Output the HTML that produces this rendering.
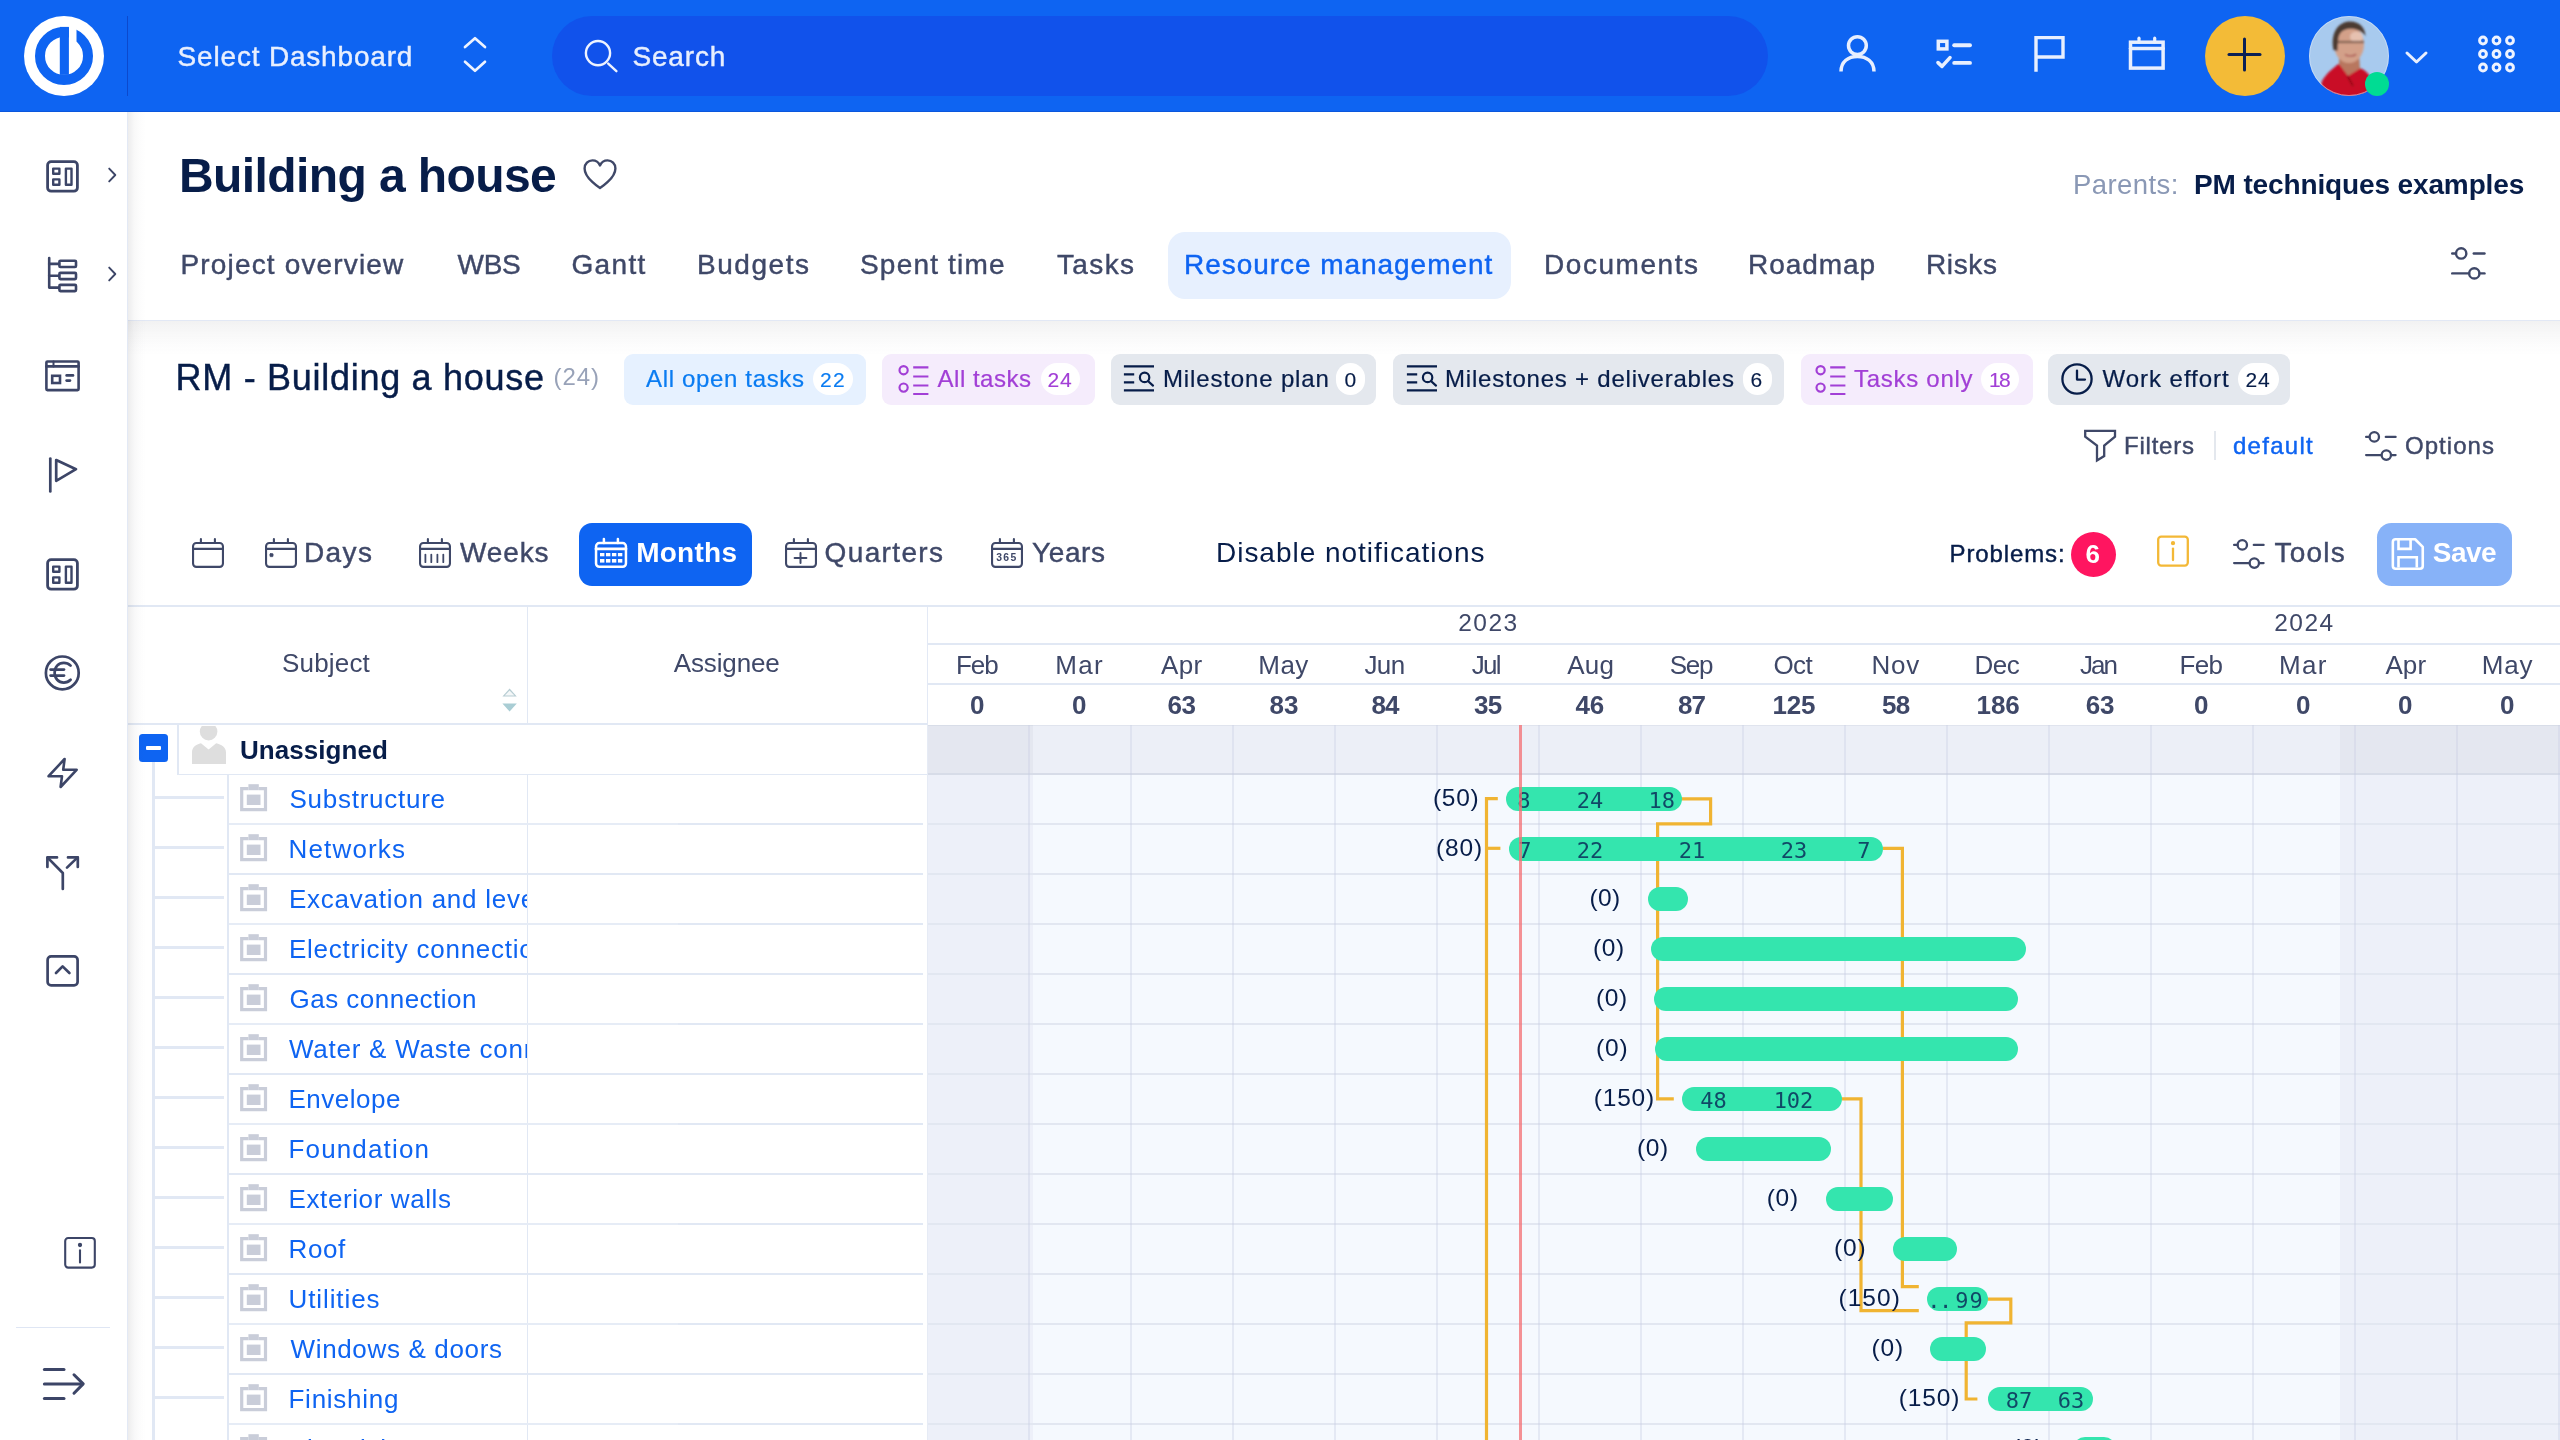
<!DOCTYPE html>
<html lang="en"><head><meta charset="utf-8"><title>Building a house - Resource management</title>
<style>
html,body{margin:0;padding:0}
body{width:2560px;height:1440px;overflow:hidden;background:#fff;position:relative;font-family:"Liberation Sans",sans-serif}
.a{position:absolute;display:block}
.g{position:absolute;left:0;top:0;width:0;height:0;display:block;margin:0;padding:0}
.t{position:absolute;display:block;white-space:nowrap;margin:0;padding:0;font-weight:400;text-decoration:none}
svg{overflow:visible}
main{position:absolute;left:0;top:0;width:2560px;height:1440px;overflow:hidden;will-change:transform}
</style></head>
<body>
<main>
<section class="g" id="saved-queries"><h2 id="rmtitle" class="t" style="left:175.5px;top:359.53px;font-size:36px;line-height:36px;color:#071d49;letter-spacing:0.717px;-webkit-text-stroke:0.42px #071d49;">RM - Building a house</h2>
<span id="rmcnt" class="t" style="left:553.5px;top:364.88px;font-size:24px;line-height:24px;color:#98a2b8;letter-spacing:0.938px;">(24)</span>
<div class="a" style="left:624px;top:354px;width:242px;height:50.5px;background:#e6f1ff;border-radius:9px;"></div>
<span id="c1" class="t" style="left:646px;top:367.18px;font-size:24px;line-height:24px;color:#0a7cf2;letter-spacing:0.66px;-webkit-text-stroke:0.22px #0a7cf2;">All open tasks</span>
<div class="a" style="left:813px;top:363px;width:39.5px;height:31.5px;background:#fff;border-radius:16px;"></div>
<span id="c1b" class="t" style="left:820px;top:368.62px;font-size:21px;line-height:21px;color:#0a7cf2;letter-spacing:1.321px;-webkit-text-stroke:0.15px #0a7cf2;">22</span>
<div class="a" style="left:882px;top:354px;width:212.5px;height:50.5px;background:#f5ecfc;border-radius:9px;"></div>
<svg class="a" style="left:897.4px;top:364.2px;" width="32" height="33" viewBox="0 0 32 33" fill="none" stroke="#a23fd6" stroke-width="2.15" stroke-linecap="round" stroke-linejoin="round"><circle cx="6.6" cy="6.2" r="4.1"/><circle cx="6.6" cy="23.6" r="4.1"/><path stroke-linecap="butt" d="M16.2 3.4 H31.4 M16.2 12.5 H31.4 M16.2 21.5 H31.4 M16.2 30 H31.4"/></svg>
<span id="c2" class="t" style="left:937.5px;top:367.18px;font-size:24px;line-height:24px;color:#a23fd6;letter-spacing:0.518px;-webkit-text-stroke:0.22px #a23fd6;">All tasks</span>
<div class="a" style="left:1040.5px;top:363px;width:39.5px;height:31.5px;background:#fff;border-radius:16px;"></div>
<span id="c2b" class="t" style="left:1047.5px;top:368.62px;font-size:21px;line-height:21px;color:#a23fd6;letter-spacing:0.821px;-webkit-text-stroke:0.15px #a23fd6;">24</span>
<div class="a" style="left:1110.5px;top:354px;width:265.5px;height:50.5px;background:#e4e8ee;border-radius:9px;"></div>
<svg class="a" style="left:1121.4px;top:363.8px;" width="34" height="29" viewBox="0 0 34 29" fill="none" stroke="#071d49" stroke-width="2.2" stroke-linecap="round" stroke-linejoin="round"><path stroke-linecap="butt" d="M2.9 2.3 H33 M2.9 26.3 H33 M2.9 10.3 H13.2 M2.9 18.3 H13.2"/><circle cx="23.6" cy="13.4" r="4.7"/><path d="M27.2 17.2 L32 21.6"/></svg>
<span id="c3" class="t" style="left:1163px;top:367.18px;font-size:24px;line-height:24px;color:#071d49;letter-spacing:0.853px;-webkit-text-stroke:0.22px #071d49;">Milestone plan</span>
<div class="a" style="left:1336px;top:363px;width:29px;height:31.5px;background:#fff;border-radius:16px;"></div>
<span id="c3b" class="t" style="left:1344.5px;top:368.62px;font-size:21px;line-height:21px;color:#071d49;-webkit-text-stroke:0.15px #071d49;">0</span>
<div class="a" style="left:1392.5px;top:354px;width:391.5px;height:50.5px;background:#e4e8ee;border-radius:9px;"></div>
<svg class="a" style="left:1403.9px;top:363.8px;" width="34" height="29" viewBox="0 0 34 29" fill="none" stroke="#071d49" stroke-width="2.2" stroke-linecap="round" stroke-linejoin="round"><path stroke-linecap="butt" d="M2.9 2.3 H33 M2.9 26.3 H33 M2.9 10.3 H13.2 M2.9 18.3 H13.2"/><circle cx="23.6" cy="13.4" r="4.7"/><path d="M27.2 17.2 L32 21.6"/></svg>
<span id="c4" class="t" style="left:1445px;top:367.18px;font-size:24px;line-height:24px;color:#071d49;letter-spacing:0.786px;-webkit-text-stroke:0.22px #071d49;">Milestones + deliverables</span>
<div class="a" style="left:1742.5px;top:363px;width:29.5px;height:31.5px;background:#fff;border-radius:16px;"></div>
<span id="c4b" class="t" style="left:1750.5px;top:368.62px;font-size:21px;line-height:21px;color:#071d49;-webkit-text-stroke:0.15px #071d49;">6</span>
<div class="a" style="left:1800.5px;top:354px;width:232px;height:50.5px;background:#f5ecfc;border-radius:9px;"></div>
<svg class="a" style="left:1814.4px;top:364.2px;" width="32" height="33" viewBox="0 0 32 33" fill="none" stroke="#a23fd6" stroke-width="2.15" stroke-linecap="round" stroke-linejoin="round"><circle cx="6.6" cy="6.2" r="4.1"/><circle cx="6.6" cy="23.6" r="4.1"/><path stroke-linecap="butt" d="M16.2 3.4 H31.4 M16.2 12.5 H31.4 M16.2 21.5 H31.4 M16.2 30 H31.4"/></svg>
<span id="c5" class="t" style="left:1854px;top:367.18px;font-size:24px;line-height:24px;color:#a23fd6;letter-spacing:0.717px;-webkit-text-stroke:0.22px #a23fd6;">Tasks only</span>
<div class="a" style="left:1981px;top:363px;width:38px;height:31.5px;background:#fff;border-radius:16px;"></div>
<span id="c5b" class="t" style="left:1989px;top:368.62px;font-size:21px;line-height:21px;color:#a23fd6;letter-spacing:-1.679px;-webkit-text-stroke:0.15px #a23fd6;">18</span>
<div class="a" style="left:2048px;top:354px;width:242px;height:50.5px;background:#e4e8ee;border-radius:9px;"></div>
<svg class="a" style="left:2060px;top:362px;" width="34" height="34" viewBox="0 0 34 34" fill="none" stroke="#071d49" stroke-width="2.3" stroke-linecap="round" stroke-linejoin="round"><circle cx="17" cy="17" r="14.6"/><path d="M17 8.6 V17.6 H25"/></svg>
<span id="c6" class="t" style="left:2102.5px;top:367.18px;font-size:24px;line-height:24px;color:#071d49;letter-spacing:0.968px;-webkit-text-stroke:0.22px #071d49;">Work effort</span>
<div class="a" style="left:2237.5px;top:363px;width:41.5px;height:31.5px;background:#fff;border-radius:16px;"></div>
<span id="c6b" class="t" style="left:2245.5px;top:368.62px;font-size:21px;line-height:21px;color:#071d49;letter-spacing:0.821px;-webkit-text-stroke:0.15px #071d49;">24</span>
<svg class="a" style="left:2082px;top:427px;" width="38" height="38" viewBox="0 0 38 38" fill="none" stroke="#3f4868" stroke-width="2.3" stroke-linecap="round" stroke-linejoin="round"><path d="M3.2 3.8 H33 V9.6 L22.2 18.6 V29 L15 33.4 V18.6 L3.2 9.6 Z" stroke-linejoin="miter"/></svg>
<span id="filters" class="t" style="left:2124px;top:433.68px;font-size:24px;line-height:24px;color:#3f4868;letter-spacing:0.778px;-webkit-text-stroke:0.42px #3f4868;">Filters</span>
<div class="a" style="left:2213.6px;top:431px;width:2.8px;height:29px;background:#e4e8ee;"></div>
<span id="default" class="t" style="left:2233px;top:433.68px;font-size:24px;line-height:24px;color:#0e64f2;letter-spacing:1.268px;-webkit-text-stroke:0.42px #0e64f2;">default</span>
<svg class="a" style="left:2365.3px;top:430.9px;" width="32" height="30" viewBox="0 0 32 30" fill="none" stroke="#3f4868" stroke-width="2.3" stroke-linecap="round" stroke-linejoin="round"><circle cx="9.3" cy="5.9" r="4.7"/><path d="M1.1 5.9 H4.4"/><path d="M20.8 5.9 H30.6"/><circle cx="21.3" cy="24.1" r="4.7"/><path d="M1.1 24.1 H16.4"/><path d="M26.2 24.1 H30.6"/></svg>
<span id="options" class="t" style="left:2405px;top:433.68px;font-size:24px;line-height:24px;color:#3f4868;letter-spacing:1.048px;-webkit-text-stroke:0.42px #3f4868;">Options</span></section>
<section class="g" id="gantt-toolbar"><svg class="a" style="left:191.9px;top:538px;" width="32" height="30" viewBox="0 0 32 30" fill="none" stroke="#3f4868" stroke-width="2.1" stroke-linecap="round" stroke-linejoin="round"><rect x="1.05" y="5.05" width="29.9" height="23.8" rx="3.3"/><path d="M8.9 1.1 V5"/><path d="M22.9 1.1 V5"/><path d="M1.05 10.9 H30.95" stroke-width="2.1"/></svg>
<svg class="a" style="left:265.3px;top:538px;" width="32" height="30" viewBox="0 0 32 30" fill="none" stroke="#3f4868" stroke-width="2.1" stroke-linecap="round" stroke-linejoin="round"><rect x="1.05" y="5.05" width="29.9" height="23.8" rx="3.3"/><path d="M8.9 1.1 V5"/><path d="M22.9 1.1 V5"/><path d="M1.05 10.9 H30.95" stroke-width="2.1"/><rect x="4.9" y="15.5" width="3.2" height="3.2" rx="0.8" fill="#3f4868" stroke-width="0.6"/></svg>
<span id="days" class="t" style="left:304px;top:538.8px;font-size:28px;line-height:28px;color:#3f4868;letter-spacing:1.402px;-webkit-text-stroke:0.42px #3f4868;">Days</span>
<svg class="a" style="left:419.1px;top:538px;" width="32" height="30" viewBox="0 0 32 30" fill="none" stroke="#3f4868" stroke-width="2.1" stroke-linecap="round" stroke-linejoin="round"><rect x="1.05" y="5.05" width="29.9" height="23.8" rx="3.3"/><path d="M8.9 1.1 V5"/><path d="M22.9 1.1 V5"/><path d="M1.05 10.9 H30.95" stroke-width="2.1"/><path d="M6.4 16.6 V24.2 M12.3 16.6 V24.2 M18.4 16.6 V24.2 M24.3 16.6 V24.2" stroke-width="1.8"/></svg>
<span id="weeks" class="t" style="left:460px;top:538.8px;font-size:28px;line-height:28px;color:#3f4868;letter-spacing:0.858px;-webkit-text-stroke:0.42px #3f4868;">Weeks</span>
<div class="a" style="left:579px;top:523px;width:173px;height:63px;background:#0e64f2;border-radius:13px;"></div>
<svg class="a" style="left:595.4px;top:538px;" width="32" height="30" viewBox="0 0 32 30" fill="none" stroke="#fff" stroke-width="2.5" stroke-linecap="round" stroke-linejoin="round"><rect x="1.05" y="5.05" width="29.9" height="23.8" rx="3.3"/><path d="M8.9 1.1 V5"/><path d="M22.9 1.1 V5"/><path d="M1.05 10.9 H30.95" stroke-width="2.9"/><rect x="5" y="15" width="4.4" height="3.3" fill="#fff" stroke="none"/><rect x="10.97" y="15" width="4.4" height="3.3" fill="#fff" stroke="none"/><rect x="16.94" y="15" width="4.4" height="3.3" fill="#fff" stroke="none"/><rect x="22.91" y="15" width="4.4" height="3.3" fill="#fff" stroke="none"/><rect x="5" y="21" width="4.4" height="3.6" fill="#fff" stroke="none"/><rect x="10.97" y="21" width="4.4" height="3.6" fill="#fff" stroke="none"/><rect x="16.94" y="21" width="4.4" height="3.6" fill="#fff" stroke="none"/><rect x="22.91" y="21" width="4.4" height="3.6" fill="#fff" stroke="none"/></svg>
<span id="months" class="t" style="left:636.2px;top:539.2px;font-size:28px;line-height:28px;color:#fff;font-weight:700;letter-spacing:0.248px;">Months</span>
<svg class="a" style="left:785px;top:538px;" width="32" height="30" viewBox="0 0 32 30" fill="none" stroke="#3f4868" stroke-width="2.1" stroke-linecap="round" stroke-linejoin="round"><rect x="1.05" y="5.05" width="29.9" height="23.8" rx="3.3"/><path d="M8.9 1.1 V5"/><path d="M22.9 1.1 V5"/><path d="M1.05 10.9 H30.95" stroke-width="2.1"/><path d="M9.6 20 H21.4 M15.5 15 V25" stroke-width="2"/></svg>
<span id="quarters" class="t" style="left:824.6px;top:538.8px;font-size:28px;line-height:28px;color:#3f4868;letter-spacing:1.354px;-webkit-text-stroke:0.42px #3f4868;">Quarters</span>
<svg class="a" style="left:991px;top:538px;" width="32" height="30" viewBox="0 0 32 30" fill="none" stroke="#3f4868" stroke-width="2.1" stroke-linecap="round" stroke-linejoin="round"><rect x="1.05" y="5.05" width="29.9" height="23.8" rx="3.3"/><path d="M8.9 1.1 V5"/><path d="M22.9 1.1 V5"/><path d="M1.05 10.9 H30.95" stroke-width="2.1"/></svg>
<span id="y365" class="t" style="left:996.2px;top:553.2px;font-size:10.4px;line-height:10.4px;color:#3f4868;font-weight:700;letter-spacing:1.321px;">365</span>
<span id="years" class="t" style="left:1032px;top:538.8px;font-size:28px;line-height:28px;color:#3f4868;letter-spacing:0.606px;-webkit-text-stroke:0.42px #3f4868;">Years</span>
<span id="disnot" class="t" style="left:1216px;top:539.3px;font-size:28px;line-height:28px;color:#071d49;letter-spacing:0.974px;">Disable notifications</span>
<span id="problems" class="t" style="left:1949.5px;top:542.18px;font-size:24px;line-height:24px;color:#071d49;letter-spacing:0.892px;-webkit-text-stroke:0.42px #071d49;">Problems:</span>
<div class="a" style="left:2070.5px;top:531.5px;width:45px;height:45px;background:#ff1560;border-radius:50%;"></div>
<span id="prob6" class="t" style="left:2085.5px;top:541.49px;font-size:26px;line-height:26px;color:#fff;font-weight:700;">6</span>
<svg class="a" style="left:2155px;top:533px;" width="36" height="36" viewBox="0 0 36 36" fill="none" stroke="#f3b836" stroke-width="2.3" stroke-linecap="round" stroke-linejoin="round"><rect x="3.2" y="3.6" width="29.6" height="29" rx="3"/><path d="M18 15.6 V27"/><circle cx="18" cy="10.2" r="1" fill="#f3b836"/></svg>
<svg class="a" style="left:2233.2px;top:539.1px;" width="32" height="30" viewBox="0 0 32 30" fill="none" stroke="#3f4868" stroke-width="2.3" stroke-linecap="round" stroke-linejoin="round"><circle cx="9.3" cy="5.9" r="4.7"/><path d="M1.1 5.9 H4.4"/><path d="M20.8 5.9 H30.6"/><circle cx="21.3" cy="24.1" r="4.7"/><path d="M1.1 24.1 H16.4"/><path d="M26.2 24.1 H30.6"/></svg>
<span id="tools" class="t" style="left:2274.5px;top:538.8px;font-size:28px;line-height:28px;color:#3f4868;letter-spacing:1.209px;-webkit-text-stroke:0.42px #3f4868;">Tools</span>
<div class="a" style="left:2376.6px;top:523px;width:135.8px;height:63px;background:#87b2f8;border-radius:14.6px;"></div>
<svg class="a" style="left:2390px;top:537px;" width="36" height="34" viewBox="0 0 36 34" fill="none" stroke="#fff" stroke-width="2.6" stroke-linecap="round" stroke-linejoin="round"><path d="M5.6 2.25 H25.1 L32.75 9.9 V29 Q32.75 31.75 30 31.75 H5.6 Q2.85 31.75 2.85 29 V5 Q2.85 2.25 5.6 2.25 Z"/><path d="M8.5 3 V11.9 H20.6 V3" stroke-linecap="butt" stroke-linejoin="miter"/><path d="M8.5 30.6 V20.2 H26.8 V30.6" stroke-linecap="butt" stroke-linejoin="miter"/></svg>
<span id="save" class="t" style="left:2432.7px;top:539.4px;font-size:28px;line-height:28px;color:#fff;font-weight:700;letter-spacing:-0.473px;">Save</span></section>
<section class="g" id="gantt-grid"><div class="a" style="left:128px;top:605px;width:2432px;height:1.6px;background:#e1e8f4;"></div>
<div class="a" style="left:526.6px;top:607px;width:1.6px;height:117px;background:#e1e8f4;"></div>
<div class="a" style="left:128px;top:723.2px;width:799px;height:1.8px;background:#e1e8f4;"></div>
<span id="subj" class="t" style="left:282px;top:650.19px;font-size:26px;line-height:26px;color:#3f4868;letter-spacing:0.184px;">Subject</span>
<svg class="a" style="left:501px;top:686px;" width="18" height="28" viewBox="0 0 18 28"><path d="M1.4 10.4 L8.6 2.6 L15.8 10.4 Z" fill="#b7cdd3"/><path d="M1.4 17.6 L8.6 25.4 L15.8 17.6 Z" fill="#a9cdd4"/><path d="M3.8 9.4 L8.6 4.4 L13.4 9.4 Z" fill="#f4f7f8"/></svg>
<span id="assg" class="t" style="left:673.8px;top:650.19px;font-size:26px;line-height:26px;color:#3f4868;letter-spacing:-0.143px;">Assignee</span>
<div class="a" style="left:139px;top:734px;width:28.5px;height:28px;background:#0e64f2;border-radius:3.5px;"></div>
<div class="a" style="left:146.4px;top:745.6px;width:14.2px;height:4.6px;background:#fff;border-radius:1px;"></div>
<div class="a" style="left:152.4px;top:762px;width:2.8px;height:678px;background:#e1e8f4;"></div>
<div class="a" style="left:177px;top:725px;width:2px;height:50.4px;background:#e1e8f4;"></div>
<div class="a" style="left:178px;top:773.6px;width:749px;height:1.8px;background:#e1e8f4;"></div>
<svg class="a" style="left:191px;top:725.6px;overflow:hidden;" width="36" height="38" viewBox="0 0 36 38"><circle cx="17.6" cy="5.6" r="8.8" fill="#dedede"/><path d="M1 38 V26.4 C1 21 5 18.4 10 17.2 L17.6 23.6 L25.2 17.2 C30.2 18.4 35 21 35 26.4 V38 Z" fill="#dedede"/></svg>
<span id="unass" class="t" style="left:240px;top:736.99px;font-size:26px;line-height:26px;color:#071d49;font-weight:700;letter-spacing:0.057px;">Unassigned</span>
<div class="a" style="left:227px;top:775.4px;width:2px;height:664.6px;background:#e1e8f4;"></div>
<div class="a" style="left:526.6px;top:775.4px;width:1.6px;height:664.6px;background:#e1e8f4;"></div>
<div class="a" style="left:155px;top:796.2px;width:68.6px;height:3px;background:#e1e8f4;"></div>
<svg class="a" style="left:239.8px;top:783.7px;" width="28" height="28" viewBox="0 0 28 28"><path d="M8.4 4.7 H1.7 V25.7 H25.5 V4.7 H18.8" stroke="#c9cdd9" stroke-width="3.2" fill="none" stroke-linejoin="miter"/><rect x="8.4" y="0.2" width="10.4" height="6" fill="#c9cdd9"/><rect x="6.8" y="10.6" width="13.7" height="10.4" fill="#c9cdd9"/></svg>
<div class="a" style="left:286px;top:775px;width:240.6px;height:48px;overflow:hidden">
<a id="row0" class="t" style="left:3.5px;top:10.99px;font-size:26px;line-height:26px;color:#0e64f2;letter-spacing:0.741px;">Substructure</a>
</div>
<div class="a" style="left:229px;top:822.9px;width:694px;height:2px;background:#e1e8f4;"></div>
<div class="a" style="left:229px;top:822.9px;width:449px;height:2.6px;background:#e6ecf6;"></div>
<div class="a" style="left:155px;top:846.2px;width:68.6px;height:3px;background:#e1e8f4;"></div>
<svg class="a" style="left:239.8px;top:833.7px;" width="28" height="28" viewBox="0 0 28 28"><path d="M8.4 4.7 H1.7 V25.7 H25.5 V4.7 H18.8" stroke="#c9cdd9" stroke-width="3.2" fill="none" stroke-linejoin="miter"/><rect x="8.4" y="0.2" width="10.4" height="6" fill="#c9cdd9"/><rect x="6.8" y="10.6" width="13.7" height="10.4" fill="#c9cdd9"/></svg>
<div class="a" style="left:286px;top:825px;width:240.6px;height:48px;overflow:hidden">
<a id="row1" class="t" style="left:2.5px;top:10.99px;font-size:26px;line-height:26px;color:#0e64f2;letter-spacing:1.164px;">Networks</a>
</div>
<div class="a" style="left:229px;top:872.9px;width:694px;height:2px;background:#e1e8f4;"></div>
<div class="a" style="left:155px;top:896.2px;width:68.6px;height:3px;background:#e1e8f4;"></div>
<svg class="a" style="left:239.8px;top:883.7px;" width="28" height="28" viewBox="0 0 28 28"><path d="M8.4 4.7 H1.7 V25.7 H25.5 V4.7 H18.8" stroke="#c9cdd9" stroke-width="3.2" fill="none" stroke-linejoin="miter"/><rect x="8.4" y="0.2" width="10.4" height="6" fill="#c9cdd9"/><rect x="6.8" y="10.6" width="13.7" height="10.4" fill="#c9cdd9"/></svg>
<div class="a" style="left:286px;top:875px;width:240.6px;height:48px;overflow:hidden">
<a id="row2" class="t" style="left:3px;top:10.99px;font-size:26px;line-height:26px;color:#0e64f2;letter-spacing:0.75px;">Excavation and leveling</a>
</div>
<div class="a" style="left:229px;top:922.9px;width:694px;height:2px;background:#e1e8f4;"></div>
<div class="a" style="left:229px;top:922.9px;width:449px;height:2.6px;background:#e6ecf6;"></div>
<div class="a" style="left:155px;top:946.2px;width:68.6px;height:3px;background:#e1e8f4;"></div>
<svg class="a" style="left:239.8px;top:933.7px;" width="28" height="28" viewBox="0 0 28 28"><path d="M8.4 4.7 H1.7 V25.7 H25.5 V4.7 H18.8" stroke="#c9cdd9" stroke-width="3.2" fill="none" stroke-linejoin="miter"/><rect x="8.4" y="0.2" width="10.4" height="6" fill="#c9cdd9"/><rect x="6.8" y="10.6" width="13.7" height="10.4" fill="#c9cdd9"/></svg>
<div class="a" style="left:286px;top:925px;width:240.6px;height:48px;overflow:hidden">
<a id="row3" class="t" style="left:3px;top:10.99px;font-size:26px;line-height:26px;color:#0e64f2;letter-spacing:0.75px;">Electricity connection</a>
</div>
<div class="a" style="left:229px;top:972.9px;width:694px;height:2px;background:#e1e8f4;"></div>
<div class="a" style="left:155px;top:996.2px;width:68.6px;height:3px;background:#e1e8f4;"></div>
<svg class="a" style="left:239.8px;top:983.7px;" width="28" height="28" viewBox="0 0 28 28"><path d="M8.4 4.7 H1.7 V25.7 H25.5 V4.7 H18.8" stroke="#c9cdd9" stroke-width="3.2" fill="none" stroke-linejoin="miter"/><rect x="8.4" y="0.2" width="10.4" height="6" fill="#c9cdd9"/><rect x="6.8" y="10.6" width="13.7" height="10.4" fill="#c9cdd9"/></svg>
<div class="a" style="left:286px;top:975px;width:240.6px;height:48px;overflow:hidden">
<a id="row4" class="t" style="left:3.5px;top:10.99px;font-size:26px;line-height:26px;color:#0e64f2;letter-spacing:0.484px;">Gas connection</a>
</div>
<div class="a" style="left:229px;top:1022.9px;width:694px;height:2px;background:#e1e8f4;"></div>
<div class="a" style="left:229px;top:1022.9px;width:449px;height:2.6px;background:#e6ecf6;"></div>
<div class="a" style="left:155px;top:1046.2px;width:68.6px;height:3px;background:#e1e8f4;"></div>
<svg class="a" style="left:239.8px;top:1033.7px;" width="28" height="28" viewBox="0 0 28 28"><path d="M8.4 4.7 H1.7 V25.7 H25.5 V4.7 H18.8" stroke="#c9cdd9" stroke-width="3.2" fill="none" stroke-linejoin="miter"/><rect x="8.4" y="0.2" width="10.4" height="6" fill="#c9cdd9"/><rect x="6.8" y="10.6" width="13.7" height="10.4" fill="#c9cdd9"/></svg>
<div class="a" style="left:286px;top:1025px;width:240.6px;height:48px;overflow:hidden">
<a id="row5" class="t" style="left:3px;top:10.99px;font-size:26px;line-height:26px;color:#0e64f2;letter-spacing:0.75px;">Water &amp; Waste connection</a>
</div>
<div class="a" style="left:229px;top:1072.9px;width:694px;height:2px;background:#e1e8f4;"></div>
<div class="a" style="left:155px;top:1096.2px;width:68.6px;height:3px;background:#e1e8f4;"></div>
<svg class="a" style="left:239.8px;top:1083.7px;" width="28" height="28" viewBox="0 0 28 28"><path d="M8.4 4.7 H1.7 V25.7 H25.5 V4.7 H18.8" stroke="#c9cdd9" stroke-width="3.2" fill="none" stroke-linejoin="miter"/><rect x="8.4" y="0.2" width="10.4" height="6" fill="#c9cdd9"/><rect x="6.8" y="10.6" width="13.7" height="10.4" fill="#c9cdd9"/></svg>
<div class="a" style="left:286px;top:1075px;width:240.6px;height:48px;overflow:hidden">
<a id="row6" class="t" style="left:2.5px;top:10.99px;font-size:26px;line-height:26px;color:#0e64f2;letter-spacing:0.506px;">Envelope</a>
</div>
<div class="a" style="left:229px;top:1122.9px;width:694px;height:2px;background:#e1e8f4;"></div>
<div class="a" style="left:229px;top:1122.9px;width:449px;height:2.6px;background:#e6ecf6;"></div>
<div class="a" style="left:155px;top:1146.2px;width:68.6px;height:3px;background:#e1e8f4;"></div>
<svg class="a" style="left:239.8px;top:1133.7px;" width="28" height="28" viewBox="0 0 28 28"><path d="M8.4 4.7 H1.7 V25.7 H25.5 V4.7 H18.8" stroke="#c9cdd9" stroke-width="3.2" fill="none" stroke-linejoin="miter"/><rect x="8.4" y="0.2" width="10.4" height="6" fill="#c9cdd9"/><rect x="6.8" y="10.6" width="13.7" height="10.4" fill="#c9cdd9"/></svg>
<div class="a" style="left:286px;top:1125px;width:240.6px;height:48px;overflow:hidden">
<a id="row7" class="t" style="left:2.5px;top:10.99px;font-size:26px;line-height:26px;color:#0e64f2;letter-spacing:1.151px;">Foundation</a>
</div>
<div class="a" style="left:229px;top:1172.9px;width:694px;height:2px;background:#e1e8f4;"></div>
<div class="a" style="left:155px;top:1196.2px;width:68.6px;height:3px;background:#e1e8f4;"></div>
<svg class="a" style="left:239.8px;top:1183.7px;" width="28" height="28" viewBox="0 0 28 28"><path d="M8.4 4.7 H1.7 V25.7 H25.5 V4.7 H18.8" stroke="#c9cdd9" stroke-width="3.2" fill="none" stroke-linejoin="miter"/><rect x="8.4" y="0.2" width="10.4" height="6" fill="#c9cdd9"/><rect x="6.8" y="10.6" width="13.7" height="10.4" fill="#c9cdd9"/></svg>
<div class="a" style="left:286px;top:1175px;width:240.6px;height:48px;overflow:hidden">
<a id="row8" class="t" style="left:2.5px;top:10.99px;font-size:26px;line-height:26px;color:#0e64f2;letter-spacing:0.608px;">Exterior walls</a>
</div>
<div class="a" style="left:229px;top:1222.9px;width:694px;height:2px;background:#e1e8f4;"></div>
<div class="a" style="left:229px;top:1222.9px;width:449px;height:2.6px;background:#e6ecf6;"></div>
<div class="a" style="left:155px;top:1246.2px;width:68.6px;height:3px;background:#e1e8f4;"></div>
<svg class="a" style="left:239.8px;top:1233.7px;" width="28" height="28" viewBox="0 0 28 28"><path d="M8.4 4.7 H1.7 V25.7 H25.5 V4.7 H18.8" stroke="#c9cdd9" stroke-width="3.2" fill="none" stroke-linejoin="miter"/><rect x="8.4" y="0.2" width="10.4" height="6" fill="#c9cdd9"/><rect x="6.8" y="10.6" width="13.7" height="10.4" fill="#c9cdd9"/></svg>
<div class="a" style="left:286px;top:1225px;width:240.6px;height:48px;overflow:hidden">
<a id="row9" class="t" style="left:2.5px;top:10.99px;font-size:26px;line-height:26px;color:#0e64f2;letter-spacing:0.601px;">Roof</a>
</div>
<div class="a" style="left:229px;top:1272.9px;width:694px;height:2px;background:#e1e8f4;"></div>
<div class="a" style="left:155px;top:1296.2px;width:68.6px;height:3px;background:#e1e8f4;"></div>
<svg class="a" style="left:239.8px;top:1283.7px;" width="28" height="28" viewBox="0 0 28 28"><path d="M8.4 4.7 H1.7 V25.7 H25.5 V4.7 H18.8" stroke="#c9cdd9" stroke-width="3.2" fill="none" stroke-linejoin="miter"/><rect x="8.4" y="0.2" width="10.4" height="6" fill="#c9cdd9"/><rect x="6.8" y="10.6" width="13.7" height="10.4" fill="#c9cdd9"/></svg>
<div class="a" style="left:286px;top:1275px;width:240.6px;height:48px;overflow:hidden">
<a id="row10" class="t" style="left:2.5px;top:10.99px;font-size:26px;line-height:26px;color:#0e64f2;letter-spacing:0.901px;">Utilities</a>
</div>
<div class="a" style="left:229px;top:1322.9px;width:694px;height:2px;background:#e1e8f4;"></div>
<div class="a" style="left:229px;top:1322.9px;width:449px;height:2.6px;background:#e6ecf6;"></div>
<div class="a" style="left:155px;top:1346.2px;width:68.6px;height:3px;background:#e1e8f4;"></div>
<svg class="a" style="left:239.8px;top:1333.7px;" width="28" height="28" viewBox="0 0 28 28"><path d="M8.4 4.7 H1.7 V25.7 H25.5 V4.7 H18.8" stroke="#c9cdd9" stroke-width="3.2" fill="none" stroke-linejoin="miter"/><rect x="8.4" y="0.2" width="10.4" height="6" fill="#c9cdd9"/><rect x="6.8" y="10.6" width="13.7" height="10.4" fill="#c9cdd9"/></svg>
<div class="a" style="left:286px;top:1325px;width:240.6px;height:48px;overflow:hidden">
<a id="row11" class="t" style="left:4.5px;top:10.99px;font-size:26px;line-height:26px;color:#0e64f2;letter-spacing:0.657px;">Windows &amp; doors</a>
</div>
<div class="a" style="left:229px;top:1372.9px;width:694px;height:2px;background:#e1e8f4;"></div>
<div class="a" style="left:155px;top:1396.2px;width:68.6px;height:3px;background:#e1e8f4;"></div>
<svg class="a" style="left:239.8px;top:1383.7px;" width="28" height="28" viewBox="0 0 28 28"><path d="M8.4 4.7 H1.7 V25.7 H25.5 V4.7 H18.8" stroke="#c9cdd9" stroke-width="3.2" fill="none" stroke-linejoin="miter"/><rect x="8.4" y="0.2" width="10.4" height="6" fill="#c9cdd9"/><rect x="6.8" y="10.6" width="13.7" height="10.4" fill="#c9cdd9"/></svg>
<div class="a" style="left:286px;top:1375px;width:240.6px;height:48px;overflow:hidden">
<a id="row12" class="t" style="left:2.5px;top:10.99px;font-size:26px;line-height:26px;color:#0e64f2;letter-spacing:0.739px;">Finishing</a>
</div>
<div class="a" style="left:229px;top:1422.9px;width:694px;height:2px;background:#e1e8f4;"></div>
<div class="a" style="left:229px;top:1422.9px;width:449px;height:2.6px;background:#e6ecf6;"></div>
<div class="a" style="left:155px;top:1446.2px;width:68.6px;height:3px;background:#e1e8f4;"></div>
<svg class="a" style="left:239.8px;top:1433.7px;" width="28" height="28" viewBox="0 0 28 28"><path d="M8.4 4.7 H1.7 V25.7 H25.5 V4.7 H18.8" stroke="#c9cdd9" stroke-width="3.2" fill="none" stroke-linejoin="miter"/><rect x="8.4" y="0.2" width="10.4" height="6" fill="#c9cdd9"/><rect x="6.8" y="10.6" width="13.7" height="10.4" fill="#c9cdd9"/></svg>
<div class="a" style="left:286px;top:1425px;width:240.6px;height:48px;overflow:hidden">
<a id="row13" class="t" style="left:3px;top:10.99px;font-size:26px;line-height:26px;color:#0e64f2;letter-spacing:0.75px;">Electricity</a>
</div></section>
<section class="g" id="gantt-timeline"><div class="a" style="left:926.6px;top:607px;width:1.4px;height:118px;background:#e3e9f5;"></div>
<div class="a" style="left:926.8px;top:725px;width:1.4px;height:715px;background:#e6ebf5;"></div>
<div class="a" style="left:928px;top:643px;width:1632px;height:2px;background:#e1e8f4;"></div>
<div class="a" style="left:928px;top:683.4px;width:1632px;height:2px;background:#e1e8f4;"></div>
<span id="y2023" class="t" style="left:1458.2px;top:611.06px;font-size:24.5px;line-height:24.5px;color:#3f4868;letter-spacing:1.508px;">2023</span>
<span id="y2024" class="t" style="left:2274.2px;top:611.06px;font-size:24.5px;line-height:24.5px;color:#3f4868;letter-spacing:1.508px;">2024</span>
<span id="m0" class="t" style="left:955.9px;top:651.99px;font-size:26px;line-height:26px;color:#3f4868;letter-spacing:-0.971px;">Feb</span>
<span id="v0" class="t" style="left:969.9px;top:691.89px;font-size:26px;line-height:26px;color:#3f4868;font-weight:700;">0</span>
<span id="m1" class="t" style="left:1055.2px;top:651.99px;font-size:26px;line-height:26px;color:#3f4868;letter-spacing:1.391px;">Mar</span>
<span id="v1" class="t" style="left:1071.9px;top:691.89px;font-size:26px;line-height:26px;color:#3f4868;font-weight:700;">0</span>
<span id="m2" class="t" style="left:1161px;top:651.99px;font-size:26px;line-height:26px;color:#3f4868;letter-spacing:0.299px;">Apr</span>
<span id="v2" class="t" style="left:1167.5px;top:691.89px;font-size:26px;line-height:26px;color:#3f4868;font-weight:700;letter-spacing:-0.46px;">63</span>
<span id="m3" class="t" style="left:1258.3px;top:651.99px;font-size:26px;line-height:26px;color:#3f4868;letter-spacing:0.441px;">May</span>
<span id="v3" class="t" style="left:1269.5px;top:691.89px;font-size:26px;line-height:26px;color:#3f4868;font-weight:700;letter-spacing:-0.06px;">83</span>
<span id="m4" class="t" style="left:1364.5px;top:651.99px;font-size:26px;line-height:26px;color:#3f4868;letter-spacing:-0.63px;">Jun</span>
<span id="v4" class="t" style="left:1371.6px;top:691.89px;font-size:26px;line-height:26px;color:#3f4868;font-weight:700;letter-spacing:-1.06px;">84</span>
<span id="m5" class="t" style="left:1471.7px;top:651.99px;font-size:26px;line-height:26px;color:#3f4868;letter-spacing:-1.68px;">Jul</span>
<span id="v5" class="t" style="left:1474px;top:691.89px;font-size:26px;line-height:26px;color:#3f4868;font-weight:700;letter-spacing:-0.66px;">35</span>
<span id="m6" class="t" style="left:1567.2px;top:651.99px;font-size:26px;line-height:26px;color:#3f4868;letter-spacing:0.249px;">Aug</span>
<span id="v6" class="t" style="left:1575.5px;top:691.89px;font-size:26px;line-height:26px;color:#3f4868;font-weight:700;letter-spacing:-0.16px;">46</span>
<span id="m7" class="t" style="left:1669.8px;top:651.99px;font-size:26px;line-height:26px;color:#3f4868;letter-spacing:-1.301px;">Sep</span>
<span id="v7" class="t" style="left:1677.9px;top:691.89px;font-size:26px;line-height:26px;color:#3f4868;font-weight:700;letter-spacing:-0.86px;">87</span>
<span id="m8" class="t" style="left:1773.4px;top:651.99px;font-size:26px;line-height:26px;color:#3f4868;letter-spacing:-0.512px;">Oct</span>
<span id="v8" class="t" style="left:1772.4px;top:691.89px;font-size:26px;line-height:26px;color:#3f4868;font-weight:700;letter-spacing:-0.16px;">125</span>
<span id="m9" class="t" style="left:1871.5px;top:651.99px;font-size:26px;line-height:26px;color:#3f4868;letter-spacing:0.732px;">Nov</span>
<span id="v9" class="t" style="left:1882px;top:691.89px;font-size:26px;line-height:26px;color:#3f4868;font-weight:700;letter-spacing:-0.76px;">58</span>
<span id="m10" class="t" style="left:1974.4px;top:651.99px;font-size:26px;line-height:26px;color:#3f4868;letter-spacing:-0.418px;">Dec</span>
<span id="v10" class="t" style="left:1976.6px;top:691.89px;font-size:26px;line-height:26px;color:#3f4868;font-weight:700;letter-spacing:-0.11px;">186</span>
<span id="m11" class="t" style="left:2080px;top:651.99px;font-size:26px;line-height:26px;color:#3f4868;letter-spacing:-1.93px;">Jan</span>
<span id="v11" class="t" style="left:2085.8px;top:691.89px;font-size:26px;line-height:26px;color:#3f4868;font-weight:700;letter-spacing:-0.26px;">63</span>
<span id="m12" class="t" style="left:2179.5px;top:651.99px;font-size:26px;line-height:26px;color:#3f4868;letter-spacing:-0.671px;">Feb</span>
<span id="v12" class="t" style="left:2194px;top:691.89px;font-size:26px;line-height:26px;color:#3f4868;font-weight:700;">0</span>
<span id="m13" class="t" style="left:2279px;top:651.99px;font-size:26px;line-height:26px;color:#3f4868;letter-spacing:1.341px;">Mar</span>
<span id="v13" class="t" style="left:2296px;top:691.89px;font-size:26px;line-height:26px;color:#3f4868;font-weight:700;">0</span>
<span id="m14" class="t" style="left:2385.4px;top:651.99px;font-size:26px;line-height:26px;color:#3f4868;letter-spacing:0.099px;">Apr</span>
<span id="v14" class="t" style="left:2398px;top:691.89px;font-size:26px;line-height:26px;color:#3f4868;font-weight:700;">0</span>
<span id="m15" class="t" style="left:2481.8px;top:651.99px;font-size:26px;line-height:26px;color:#3f4868;letter-spacing:0.791px;">May</span>
<span id="v15" class="t" style="left:2500px;top:691.89px;font-size:26px;line-height:26px;color:#3f4868;font-weight:700;">0</span>
<div class="a" style="left:928.2px;top:725px;width:1631.8px;height:715px;background:#f5f9fe;overflow:hidden">
<div class="a" style="left:0px;top:0px;width:104.8px;height:715px;background:#edf0f9;"></div>
<div class="a" style="left:1411.8px;top:0px;width:220px;height:715px;background:#edf0f9;"></div>
<div class="a" style="left:0px;top:0px;width:1631.8px;height:49px;background:#eceff7;"></div>
<div class="a" style="left:0px;top:0px;width:104.8px;height:49px;background:#e4e7f0;"></div>
<div class="a" style="left:1411.8px;top:0px;width:220px;height:49px;background:#e4e7f0;"></div>
<div class="a" style="left:0px;top:-2px;width:1631.8px;height:2.8px;background:rgba(120,135,170,0.10);"></div>
<div class="a" style="left:0px;top:47.9px;width:1631.8px;height:2.1px;background:#d7dce8;"></div>
<div class="a" style="left:0px;top:97.9px;width:1631.8px;height:2.1px;background:#e2e7f1;"></div>
<div class="a" style="left:0px;top:147.9px;width:1631.8px;height:2.1px;background:#e2e7f1;"></div>
<div class="a" style="left:0px;top:197.9px;width:1631.8px;height:2.1px;background:#e2e7f1;"></div>
<div class="a" style="left:0px;top:247.9px;width:1631.8px;height:2.1px;background:#e2e7f1;"></div>
<div class="a" style="left:0px;top:297.9px;width:1631.8px;height:2.1px;background:#e2e7f1;"></div>
<div class="a" style="left:0px;top:347.9px;width:1631.8px;height:2.1px;background:#e2e7f1;"></div>
<div class="a" style="left:0px;top:397.9px;width:1631.8px;height:2.1px;background:#e2e7f1;"></div>
<div class="a" style="left:0px;top:447.9px;width:1631.8px;height:2.1px;background:#e2e7f1;"></div>
<div class="a" style="left:0px;top:497.9px;width:1631.8px;height:2.1px;background:#e2e7f1;"></div>
<div class="a" style="left:0px;top:547.9px;width:1631.8px;height:2.1px;background:#e2e7f1;"></div>
<div class="a" style="left:0px;top:597.9px;width:1631.8px;height:2.1px;background:#e2e7f1;"></div>
<div class="a" style="left:0px;top:647.9px;width:1631.8px;height:2.1px;background:#e2e7f1;"></div>
<div class="a" style="left:0px;top:697.9px;width:1631.8px;height:2.1px;background:#e2e7f1;"></div>
<div class="a" style="left:0px;top:747.9px;width:1631.8px;height:2.1px;background:#e2e7f1;"></div>
<div class="a" style="left:100.1px;top:0px;width:2px;height:715px;background:rgba(200,206,226,0.36);"></div>
<div class="a" style="left:202.1px;top:0px;width:2px;height:715px;background:rgba(200,206,226,0.36);"></div>
<div class="a" style="left:304.1px;top:0px;width:2px;height:715px;background:rgba(200,206,226,0.36);"></div>
<div class="a" style="left:406.1px;top:0px;width:2px;height:715px;background:rgba(200,206,226,0.36);"></div>
<div class="a" style="left:508.1px;top:0px;width:2px;height:715px;background:rgba(200,206,226,0.36);"></div>
<div class="a" style="left:610.1px;top:0px;width:2px;height:715px;background:rgba(200,206,226,0.36);"></div>
<div class="a" style="left:712.1px;top:0px;width:2px;height:715px;background:rgba(200,206,226,0.36);"></div>
<div class="a" style="left:814.1px;top:0px;width:2px;height:715px;background:rgba(200,206,226,0.36);"></div>
<div class="a" style="left:916.1px;top:0px;width:2px;height:715px;background:rgba(200,206,226,0.36);"></div>
<div class="a" style="left:1018.1px;top:0px;width:2px;height:715px;background:rgba(200,206,226,0.36);"></div>
<div class="a" style="left:1120.1px;top:0px;width:2px;height:715px;background:rgba(200,206,226,0.36);"></div>
<div class="a" style="left:1222.1px;top:0px;width:2px;height:715px;background:rgba(200,206,226,0.36);"></div>
<div class="a" style="left:1324.1px;top:0px;width:2px;height:715px;background:rgba(200,206,226,0.36);"></div>
<div class="a" style="left:1426.1px;top:0px;width:2px;height:715px;background:rgba(200,206,226,0.36);"></div>
<div class="a" style="left:1528.1px;top:0px;width:2px;height:715px;background:rgba(200,206,226,0.36);"></div>
<div class="a" style="left:1630.1px;top:0px;width:2px;height:715px;background:rgba(200,206,226,0.36);"></div>
<svg class="a" style="left:0;top:0" width="1632" height="715" viewBox="928.2 725 1632 715" fill="none" stroke="#f0b432" stroke-width="3.2" stroke-linejoin="miter"><path d="M1498 798.7 H1486.7 V1440"/><path d="M1500.6 848.3 H1486.7"/><path d="M1681 798.8 H1710.8 V823.8 H1657.8 V1098.8 H1674"/><path d="M1883 848.3 H1902.6 V1286.6 H1919"/><path d="M1842 1098.8 H1861.2 V1310.6 H1919"/><path d="M1987.5 1299.2 H2011 V1322.8 H1966.4 V1399 H1977.6"/></svg>
<div class="a" style="left:577.8px;top:61.6px;width:175.7px;height:24.2px;background:#34e5ae;border-radius:12.1px;"></div>
<div class="a" style="left:580.8px;top:111.6px;width:374.3px;height:24.2px;background:#34e5ae;border-radius:12.1px;"></div>
<div class="a" style="left:719.8px;top:161.6px;width:40px;height:24.2px;background:#34e5ae;border-radius:12.1px;"></div>
<div class="a" style="left:722.8px;top:211.6px;width:375px;height:24.2px;background:#34e5ae;border-radius:12.1px;"></div>
<div class="a" style="left:726.3px;top:261.6px;width:363.5px;height:24.2px;background:#34e5ae;border-radius:12.1px;"></div>
<div class="a" style="left:726.4px;top:311.6px;width:363.4px;height:24.2px;background:#34e5ae;border-radius:12.1px;"></div>
<div class="a" style="left:753.8px;top:361.6px;width:160.2px;height:24.2px;background:#34e5ae;border-radius:12.1px;"></div>
<div class="a" style="left:768.1px;top:411.6px;width:134.5px;height:24.2px;background:#34e5ae;border-radius:12.1px;"></div>
<div class="a" style="left:897.8px;top:461.6px;width:67.3px;height:24.2px;background:#34e5ae;border-radius:12.1px;"></div>
<div class="a" style="left:965.1px;top:511.6px;width:64px;height:24.2px;background:#34e5ae;border-radius:12.1px;"></div>
<div class="a" style="left:998.8px;top:561.6px;width:60.8px;height:24.2px;background:#34e5ae;border-radius:12.1px;"></div>
<div class="a" style="left:1001.8px;top:611.6px;width:56px;height:24.2px;background:#34e5ae;border-radius:12.1px;"></div>
<div class="a" style="left:1059.6px;top:661.6px;width:105.7px;height:24.2px;background:#34e5ae;border-radius:12.1px;"></div>
<div class="a" style="left:1144.4px;top:711.6px;width:43.4px;height:24.2px;background:#34e5ae;border-radius:12.1px;"></div>
<span id="bt0_0" class="t" style="left:588.98px;top:65.09px;font-size:22px;line-height:22px;color:rgba(8,32,84,0.8);font-family:'Liberation Mono', monospace;font-family:'DejaVu Sans Mono', 'Liberation Mono', monospace;white-space:pre;filter:blur(0.65px);">8</span>
<span id="bt0_1" class="t" style="left:648.56px;top:65.09px;font-size:22px;line-height:22px;color:rgba(8,32,84,0.8);font-family:'Liberation Mono', monospace;font-family:'DejaVu Sans Mono', 'Liberation Mono', monospace;white-space:pre;filter:blur(0.65px);">24</span>
<span id="bt0_2" class="t" style="left:720.36px;top:65.09px;font-size:22px;line-height:22px;color:rgba(8,32,84,0.8);font-family:'Liberation Mono', monospace;font-family:'DejaVu Sans Mono', 'Liberation Mono', monospace;white-space:pre;filter:blur(0.65px);">18</span>
<span id="lab0" class="t" style="left:504.8px;top:60.56px;font-size:24.5px;line-height:24.5px;color:#071d49;letter-spacing:0.73px;">(50)</span>
<span id="bt1_0" class="t" style="left:589.98px;top:115.09px;font-size:22px;line-height:22px;color:rgba(8,32,84,0.8);font-family:'Liberation Mono', monospace;font-family:'DejaVu Sans Mono', 'Liberation Mono', monospace;white-space:pre;filter:blur(0.65px);">7</span>
<span id="bt1_1" class="t" style="left:648.56px;top:115.09px;font-size:22px;line-height:22px;color:rgba(8,32,84,0.8);font-family:'Liberation Mono', monospace;font-family:'DejaVu Sans Mono', 'Liberation Mono', monospace;white-space:pre;filter:blur(0.65px);">22</span>
<span id="bt1_2" class="t" style="left:750.56px;top:115.09px;font-size:22px;line-height:22px;color:rgba(8,32,84,0.8);font-family:'Liberation Mono', monospace;font-family:'DejaVu Sans Mono', 'Liberation Mono', monospace;white-space:pre;filter:blur(0.65px);">21</span>
<span id="bt1_3" class="t" style="left:852.56px;top:115.09px;font-size:22px;line-height:22px;color:rgba(8,32,84,0.8);font-family:'Liberation Mono', monospace;font-family:'DejaVu Sans Mono', 'Liberation Mono', monospace;white-space:pre;filter:blur(0.65px);">23</span>
<span id="bt1_4" class="t" style="left:929.18px;top:115.09px;font-size:22px;line-height:22px;color:rgba(8,32,84,0.8);font-family:'Liberation Mono', monospace;font-family:'DejaVu Sans Mono', 'Liberation Mono', monospace;white-space:pre;filter:blur(0.65px);">7</span>
<span id="lab1" class="t" style="left:507.8px;top:110.56px;font-size:24.5px;line-height:24.5px;color:#071d49;letter-spacing:0.863px;">(80)</span>
<span id="lab2" class="t" style="left:661.2px;top:160.56px;font-size:24.5px;line-height:24.5px;color:#071d49;letter-spacing:0.408px;">(0)</span>
<span id="lab3" class="t" style="left:664.8px;top:210.56px;font-size:24.5px;line-height:24.5px;color:#071d49;letter-spacing:0.608px;">(0)</span>
<span id="lab4" class="t" style="left:667.8px;top:260.56px;font-size:24.5px;line-height:24.5px;color:#071d49;letter-spacing:0.608px;">(0)</span>
<span id="lab5" class="t" style="left:667.8px;top:310.56px;font-size:24.5px;line-height:24.5px;color:#071d49;letter-spacing:0.908px;">(0)</span>
<span id="bt6_0" class="t" style="left:772.16px;top:365.09px;font-size:22px;line-height:22px;color:rgba(8,32,84,0.8);font-family:'Liberation Mono', monospace;font-family:'DejaVu Sans Mono', 'Liberation Mono', monospace;white-space:pre;filter:blur(0.65px);">48</span>
<span id="bt6_1" class="t" style="left:845.44px;top:365.09px;font-size:22px;line-height:22px;color:rgba(8,32,84,0.8);font-family:'Liberation Mono', monospace;font-family:'DejaVu Sans Mono', 'Liberation Mono', monospace;white-space:pre;filter:blur(0.65px);">102</span>
<span id="lab6" class="t" style="left:665.6px;top:360.56px;font-size:24.5px;line-height:24.5px;color:#071d49;letter-spacing:0.791px;">(150)</span>
<span id="lab7" class="t" style="left:708.8px;top:410.56px;font-size:24.5px;line-height:24.5px;color:#071d49;letter-spacing:0.608px;">(0)</span>
<span id="lab8" class="t" style="left:838.5px;top:460.56px;font-size:24.5px;line-height:24.5px;color:#071d49;letter-spacing:0.758px;">(0)</span>
<span id="lab9" class="t" style="left:905.8px;top:510.56px;font-size:24.5px;line-height:24.5px;color:#071d49;letter-spacing:0.808px;">(0)</span>
<span id="bt10_0" class="t" style="left:999.16px;top:565.09px;font-size:22px;line-height:22px;color:rgba(8,32,84,0.8);font-family:'Liberation Mono', monospace;font-family:'DejaVu Sans Mono', 'Liberation Mono', monospace;white-space:pre;filter:blur(0.65px);letter-spacing:-1.7px;">..</span>
<span id="bt10_1" class="t" style="left:1027.11px;top:565.09px;font-size:22px;line-height:22px;color:rgba(8,32,84,0.8);font-family:'Liberation Mono', monospace;font-family:'DejaVu Sans Mono', 'Liberation Mono', monospace;white-space:pre;filter:blur(0.65px);letter-spacing:0.9px;">99</span>
<span id="lab10" class="t" style="left:910.3px;top:560.56px;font-size:24.5px;line-height:24.5px;color:#071d49;letter-spacing:1.041px;">(150)</span>
<span id="lab11" class="t" style="left:943.3px;top:610.56px;font-size:24.5px;line-height:24.5px;color:#071d49;letter-spacing:0.858px;">(0)</span>
<span id="bt12_0" class="t" style="left:1077.56px;top:665.09px;font-size:22px;line-height:22px;color:rgba(8,32,84,0.8);font-family:'Liberation Mono', monospace;font-family:'DejaVu Sans Mono', 'Liberation Mono', monospace;white-space:pre;filter:blur(0.65px);">87</span>
<span id="bt12_1" class="t" style="left:1129.56px;top:665.09px;font-size:22px;line-height:22px;color:rgba(8,32,84,0.8);font-family:'Liberation Mono', monospace;font-family:'DejaVu Sans Mono', 'Liberation Mono', monospace;white-space:pre;filter:blur(0.65px);">63</span>
<span id="lab12" class="t" style="left:970.5px;top:660.56px;font-size:24.5px;line-height:24.5px;color:#071d49;letter-spacing:0.891px;">(150)</span>
<span id="lab13" class="t" style="left:1083.8px;top:710.56px;font-size:24.5px;line-height:24.5px;color:#071d49;letter-spacing:0.608px;">(0)</span>
<div class="a" style="left:590.6px;top:0px;width:3.2px;height:715px;background:rgba(243,112,116,0.76);"></div>
</div></section>
<section class="g" id="project-header"><div class="a" style="left:128px;top:112px;width:2432px;height:208px;background:#fff;border-bottom:1.4px solid #e2e8f5"></div>
<div class="a" style="left:128px;top:321.4px;width:2432px;height:34.6px;background:linear-gradient(180deg,rgba(30,30,40,0.058),rgba(30,30,40,0.03) 35%,rgba(30,30,40,0.01) 70%,rgba(30,30,40,0));"></div>
<h1 id="h1" class="t" style="left:179px;top:152.17px;font-size:48px;line-height:48px;color:#071d49;font-weight:700;letter-spacing:-0.598px;">Building a house</h1>
<svg class="a" style="left:580px;top:156px;" width="40" height="37" viewBox="0 0 40 37" fill="none" stroke="#3f4868" stroke-width="2.4" stroke-linecap="round" stroke-linejoin="round"><path d="M20 32 C20 32 4.6 22.4 4.6 12.4 C4.6 7.6 8.2 4.4 12.4 4.4 C15.6 4.4 18.6 6.2 20 9.4 C21.4 6.2 24.4 4.4 27.6 4.4 C31.8 4.4 35.4 7.6 35.4 12.4 C35.4 22.4 20 32 20 32 Z"/></svg>
<span id="parents" class="t" style="left:2073px;top:171.22px;font-size:27.5px;line-height:27.5px;color:#8a98b5;letter-spacing:0.418px;">Parents:</span>
<span id="pmtech" class="t" style="left:2194px;top:170.8px;font-size:28px;line-height:28px;color:#071d49;font-weight:700;letter-spacing:-0.13px;">PM techniques examples</span>
<nav>
<a id="tab0" class="t" style="left:180.5px;top:251.3px;font-size:28px;line-height:28px;color:#3f4868;letter-spacing:1.154px;-webkit-text-stroke:0.42px #3f4868;">Project overview</a>
<a id="tab1" class="t" style="left:457.5px;top:251.3px;font-size:28px;line-height:28px;color:#3f4868;letter-spacing:-0.302px;-webkit-text-stroke:0.42px #3f4868;">WBS</a>
<a id="tab2" class="t" style="left:571.5px;top:251.3px;font-size:28px;line-height:28px;color:#3f4868;letter-spacing:1.324px;-webkit-text-stroke:0.42px #3f4868;">Gantt</a>
<a id="tab3" class="t" style="left:697px;top:251.3px;font-size:28px;line-height:28px;color:#3f4868;letter-spacing:1.543px;-webkit-text-stroke:0.42px #3f4868;">Budgets</a>
<a id="tab4" class="t" style="left:860px;top:251.3px;font-size:28px;line-height:28px;color:#3f4868;letter-spacing:1.192px;-webkit-text-stroke:0.42px #3f4868;">Spent time</a>
<a id="tab5" class="t" style="left:1057px;top:251.3px;font-size:28px;line-height:28px;color:#3f4868;letter-spacing:1.357px;-webkit-text-stroke:0.42px #3f4868;">Tasks</a>
<div class="a" style="left:1168px;top:232px;width:342.5px;height:67px;background:#e7f0fe;border-radius:17px;"></div>
<a id="tabrm" class="t" style="left:1184px;top:251.3px;font-size:28px;line-height:28px;color:#0e64f2;letter-spacing:0.957px;-webkit-text-stroke:0.42px #0e64f2;">Resource management</a>
<a id="tabb0" class="t" style="left:1544px;top:251.3px;font-size:28px;line-height:28px;color:#3f4868;letter-spacing:1.548px;-webkit-text-stroke:0.42px #3f4868;">Documents</a>
<a id="tabb1" class="t" style="left:1748px;top:251.3px;font-size:28px;line-height:28px;color:#3f4868;letter-spacing:0.944px;-webkit-text-stroke:0.42px #3f4868;">Roadmap</a>
<a id="tabb2" class="t" style="left:1926px;top:251.3px;font-size:28px;line-height:28px;color:#3f4868;letter-spacing:0.64px;-webkit-text-stroke:0.42px #3f4868;">Risks</a>
</nav>
<svg class="a" style="left:2451px;top:246.5px;" width="35.04" height="32.85" viewBox="0 0 35.04 32.85" fill="none" stroke="#3f4868" stroke-width="2.4" stroke-linecap="round" stroke-linejoin="round"><circle cx="10.18" cy="6.46" r="5.15"/><path d="M1.2 6.46 H4.82"/><path d="M22.78 6.46 H33.51"/><circle cx="23.32" cy="26.39" r="5.15"/><path d="M1.2 26.39 H17.96"/><path d="M28.69 26.39 H33.51"/></svg></section>
<div class="a" style="left:128px;top:112px;width:18px;height:1328px;background:linear-gradient(90deg,rgba(40,40,50,0.085),rgba(40,40,50,0.033) 35%,rgba(40,40,50,0.012) 65%,rgba(40,40,50,0));"></div>
<aside class="g" id="sidebar">
<div class="a" style="left:0;top:112px;width:128px;height:1328px;background:#fff;border-right:1px solid #e3e9f5;box-sizing:border-box"></div>
<svg class="a" style="left:46px;top:159.9px;" width="33" height="33" viewBox="0 0 33 33" fill="none" stroke="#3c4567" stroke-width="2.8" stroke-linecap="round" stroke-linejoin="round"><rect x="1.6" y="1.6" width="29.8" height="29.6" rx="3.5"/><rect x="7.2" y="8.6" width="6.2" height="5.2" stroke-width="2.4"/><rect x="7.2" y="19.4" width="6.2" height="5.4" stroke-width="2.4"/><rect x="19.9" y="8.6" width="5.6" height="16.2" stroke-width="2.4"/></svg>
<svg class="a" style="left:106px;top:166.3px;" width="12" height="18" viewBox="0 0 12 18" fill="none" stroke="#3c4567" stroke-width="1.9" stroke-linecap="round" stroke-linejoin="round"><path d="M3.2 2.6 L9.3 9 L3.2 15.4"/></svg>
<svg class="a" style="left:44px;top:254px;" width="38" height="42" viewBox="0 0 38 42" fill="none" stroke="#3c4567" stroke-width="2.6" stroke-linecap="round" stroke-linejoin="round"><path d="M5.2 4 V33.6 H15"/><path d="M5.2 9.9 H15"/><path d="M5.2 21.8 H15"/><rect x="15.4" y="6.8" width="16.6" height="6.2" rx="1"/><rect x="15.4" y="18.9" width="16.6" height="6.2" rx="1"/><rect x="15.4" y="30.9" width="16.6" height="6.2" rx="1"/></svg>
<svg class="a" style="left:106px;top:265.4px;" width="12" height="18" viewBox="0 0 12 18" fill="none" stroke="#3c4567" stroke-width="1.9" stroke-linecap="round" stroke-linejoin="round"><path d="M3.2 2.6 L9.3 9 L3.2 15.4"/></svg>
<svg class="a" style="left:43px;top:358px;" width="40" height="36" viewBox="0 0 40 36" fill="none" stroke="#3c4567" stroke-width="2.6" stroke-linecap="round" stroke-linejoin="round"><rect x="3.4" y="3.5" width="32.2" height="28.6" rx="1" stroke-linejoin="miter"/><path d="M3.4 8.4 H35.6"/><path d="M10.5 3.5 V8.4" stroke-width="2"/><rect x="9.2" y="17.8" width="7.8" height="7.2" stroke-linejoin="miter"/><path d="M23.6 17.4 H30"/><path d="M23.6 22.6 H27"/></svg>
<svg class="a" style="left:44px;top:452px;" width="40" height="46" viewBox="0 0 40 46" fill="none" stroke="#3c4567" stroke-width="2.7" stroke-linecap="round" stroke-linejoin="round"><path d="M6.3 6.6 V39.4"/><path d="M12.2 8 L32 17.2 L12.2 28.8 Z"/></svg>
<svg class="a" style="left:46px;top:557.6px;" width="33" height="33" viewBox="0 0 33 33" fill="none" stroke="#3c4567" stroke-width="2.8" stroke-linecap="round" stroke-linejoin="round"><rect x="1.6" y="1.6" width="29.8" height="29.6" rx="3.5"/><rect x="7.2" y="8.6" width="6.2" height="5.2" stroke-width="2.4"/><rect x="7.2" y="19.4" width="6.2" height="5.4" stroke-width="2.4"/><rect x="19.9" y="8.6" width="5.6" height="16.2" stroke-width="2.4"/></svg>
<svg class="a" style="left:42px;top:652px;" width="42" height="42" viewBox="0 0 42 42" fill="none" stroke="#3c4567" stroke-width="2.7" stroke-linecap="round" stroke-linejoin="round"><circle cx="20.3" cy="20.9" r="16.4"/><path d="M28.6 13.6 C26.6 11.6 24.2 10.8 21.8 10.8 C16.4 10.8 12.6 15 12.6 20.7 C12.6 26.4 16.4 30.6 21.8 30.6 C24.2 30.6 26.6 29.8 28.6 27.8"/><path d="M8.6 17.6 H22"/><path d="M8.6 23.6 H22"/></svg>
<svg class="a" style="left:44px;top:754px;" width="38" height="38" viewBox="0 0 38 38" fill="none" stroke="#3c4567" stroke-width="2.6" stroke-linecap="round" stroke-linejoin="round"><path d="M20.6 5 L4.6 22.2 H18 L16.6 33 L32.6 15.8 H19.2 Z"/></svg>
<svg class="a" style="left:42px;top:852px;" width="42" height="42" viewBox="0 0 42 42" fill="none" stroke="#3c4567" stroke-width="2.7" stroke-linecap="round" stroke-linejoin="round"><path d="M20.8 37 V21 L5.6 5.6"/><path d="M5.4 15 V5.4 H15"/><path d="M25 15.6 L35.6 5.4"/><path d="M26 5.4 H35.8 V15"/></svg>
<svg class="a" style="left:44px;top:953px;" width="38" height="36" viewBox="0 0 38 36" fill="none" stroke="#3c4567" stroke-width="2.7" stroke-linecap="round" stroke-linejoin="round"><rect x="3.6" y="3.4" width="30" height="29" rx="3.5"/><path d="M12 20 L18.6 13.4 L25.4 20"/></svg>
<svg class="a" style="left:62px;top:1235px;" width="36" height="36" viewBox="0 0 36 36" fill="none" stroke="#3c4567" stroke-width="2.1" stroke-linecap="round" stroke-linejoin="round"><rect x="3.2" y="3" width="29.6" height="29.6" rx="3"/><path d="M18 15.4 V27.4"/><circle cx="18" cy="10" r="1.1" fill="#3c4567"/></svg>
<div class="a" style="left:16px;top:1327px;width:94px;height:1.4px;background:#dfe6f4;"></div>
<svg class="a" style="left:40px;top:1364px;" width="48" height="40" viewBox="0 0 48 40" fill="none" stroke="#3c4567" stroke-width="3" stroke-linecap="round" stroke-linejoin="round"><path d="M4.4 5.6 H24"/><path d="M4.4 19.9 H42"/><path d="M4.4 34.4 H24"/><path d="M34 10.8 L43.2 19.9 L34 29.2"/></svg>
</aside>
<header class="a" style="left:0;top:0;width:2560px;height:112px;background:#0e64f2;border-bottom:1px solid #0b56dc;box-sizing:border-box">
<svg class="a" style="left:24px;top:16px;" width="80" height="80" viewBox="0 0 80 80"><circle cx="40" cy="40" r="40" fill="#fff"/><circle cx="40" cy="39.9" r="24" fill="none" stroke="#0e64f2" stroke-width="10"/><rect x="44.9" y="6" width="7.6" height="22" fill="#fff"/><rect x="35.8" y="10.9" width="9.1" height="48" fill="#0e64f2"/></svg>
<div class="a" style="left:127px;top:16px;width:1px;height:80px;background:rgba(10,40,160,0.45);"></div>
<span id="seldash" class="t" style="left:177.6px;top:42.9px;font-size:28px;line-height:28px;color:#e8effe;letter-spacing:0.813px;-webkit-text-stroke:0.42px #e8effe;">Select Dashboard</span>
<svg class="a" style="left:460px;top:32px;" width="30" height="46" viewBox="0 0 30 46" fill="none" stroke="#eef3ff" stroke-width="2.7" stroke-linecap="round" stroke-linejoin="round"><path d="M5 15 L15 6.2 L25 15"/><path d="M5 29.8 L15 38.8 L25 29.8"/></svg>
<div class="a" style="left:552px;top:16px;width:1216px;height:80px;background:#1152eb;border-radius:40px;"></div>
<svg class="a" style="left:580px;top:36px;" width="40" height="40" viewBox="0 0 40 40" fill="none" stroke="#eef3ff" stroke-width="2.4" stroke-linecap="round" stroke-linejoin="round"><circle cx="18" cy="17.1" r="12.1"/><path d="M28.2 27.6 L36.4 35.2"/></svg>
<span id="search" class="t" style="left:632.4px;top:42.9px;font-size:28px;line-height:28px;color:#e8effe;letter-spacing:0.851px;-webkit-text-stroke:0.42px #e8effe;">Search</span>
<svg class="a" style="left:1835px;top:32px;" width="46" height="46" viewBox="0 0 46 46" fill="none" stroke="#e8effe" stroke-width="3.5" stroke-linecap="round" stroke-linejoin="round"><circle cx="22.4" cy="13.6" r="8.9"/><path d="M6 39.6 C6 29.6 13.2 24.4 22.4 24.4 C31.6 24.4 39 29.6 39 39.6" stroke-linecap="butt"/></svg>
<svg class="a" style="left:1932px;top:34px;" width="46" height="40" viewBox="0 0 46 40" fill="none" stroke="#e8effe" stroke-width="3.9" stroke-linecap="round" stroke-linejoin="round"><rect x="6.3" y="7.3" width="8.6" height="7.6" stroke-linejoin="miter" stroke-width="3.5"/><path d="M22.2 11.3 H38"/><path d="M22.2 28.9 H38"/><path d="M6 28.6 L10 32.4 L18 23.6" stroke-width="3.6"/></svg>
<svg class="a" style="left:2030px;top:32px;" width="40" height="46" viewBox="0 0 40 46" fill="none" stroke="#e8effe" stroke-width="3.4" stroke-linecap="round" stroke-linejoin="round"><path d="M6 39.8 V5.6 H33 V25 H6" stroke-linejoin="miter" stroke-linecap="butt"/></svg>
<svg class="a" style="left:2124px;top:32px;" width="46" height="44" viewBox="0 0 46 44" fill="none" stroke="#e8effe" stroke-width="3.5" stroke-linecap="round" stroke-linejoin="round"><rect x="6.5" y="10.2" width="32.6" height="25.9" stroke-linejoin="miter"/><path d="M6.5 16.4 H39.1"/><path d="M15 6.2 V10" stroke-width="3.2"/><path d="M30.7 6.2 V10" stroke-width="3.2"/></svg>
<div class="a" style="left:2205px;top:16px;width:80px;height:80px;background:#f3bb37;border-radius:50%;"></div>
<svg class="a" style="left:2225px;top:36px;" width="40" height="40" viewBox="0 0 40 40" fill="none" stroke="#0a1f55" stroke-width="3" stroke-linecap="round" stroke-linejoin="round"><path d="M4 18.5 H35"/><path d="M19.5 3 V34"/></svg>
<svg class="a" style="left:2309px;top:16px;" width="80" height="80" viewBox="0 0 80 80"><defs><clipPath id="avc"><circle cx="40" cy="40" r="40"/></clipPath><filter id="avb" x="-10%" y="-10%" width="120%" height="120%"><feGaussianBlur stdDeviation="0.9"/></filter></defs><g clip-path="url(#avc)"><rect width="80" height="80" fill="#a8caee"/><g filter="url(#avb)"><path d="M9 84 L13 65 C17 58 24 52 30 47.5 L39 59 L51 52 C56 54 60 58 62 62 L71 84 Z" fill="#c90a26"/><path d="M30 47.5 L39 60 L51 52.5 L50 38 L30 38 Z" fill="#b8775e"/><ellipse cx="40" cy="28.5" rx="15" ry="18.6" fill="#d3a089"/><ellipse cx="47.5" cy="21" rx="6.5" ry="5.5" fill="#ecccbd" opacity="0.75"/><path d="M24.5 34 C21 16 30 5.5 41 5.5 C51 5.5 56 12 56.5 20 C52 14 46 12.2 40 12.8 C33 13.4 29.6 18 29.2 24 L28.4 35 Z" fill="#4c3a32"/><path d="M29 26 H55" stroke="#76574a" stroke-width="2.3" fill="none" opacity="0.85"/><path d="M36 38.3 C39 40.6 44 40.6 47.2 38.2" stroke="#ad5d58" stroke-width="1.7" fill="none"/><path d="M38.5 60 L44 70" stroke="#8e0618" stroke-width="1.6" fill="none"/></g></g><circle cx="40" cy="40" r="39.5" fill="none" stroke="rgba(220,232,250,0.55)" stroke-width="1"/></svg>
<div class="a" style="left:2365px;top:72px;width:24px;height:24px;background:#00dc93;border-radius:50%;"></div>
<svg class="a" style="left:2402px;top:48px;" width="30" height="20" viewBox="0 0 30 20" fill="none" stroke="#e8effe" stroke-width="3" stroke-linecap="round" stroke-linejoin="round"><path d="M5 5 L14.5 14 L24 5"/></svg>
<svg class="a" style="left:2470px;top:30px;" width="54" height="50" viewBox="0 0 54 50" fill="none" stroke="#eef3ff" stroke-width="3" stroke-linecap="round" stroke-linejoin="round"><circle cx="13" cy="10.5" r="3.4"/><circle cx="26.5" cy="10.5" r="3.4"/><circle cx="40" cy="10.5" r="3.4"/><circle cx="13" cy="24" r="3.4"/><circle cx="26.5" cy="24" r="3.4"/><circle cx="40" cy="24" r="3.4"/><circle cx="13" cy="37.5" r="3.4"/><circle cx="26.5" cy="37.5" r="3.4"/><circle cx="40" cy="37.5" r="3.4"/></svg>
</header>
</main>
</body></html>
